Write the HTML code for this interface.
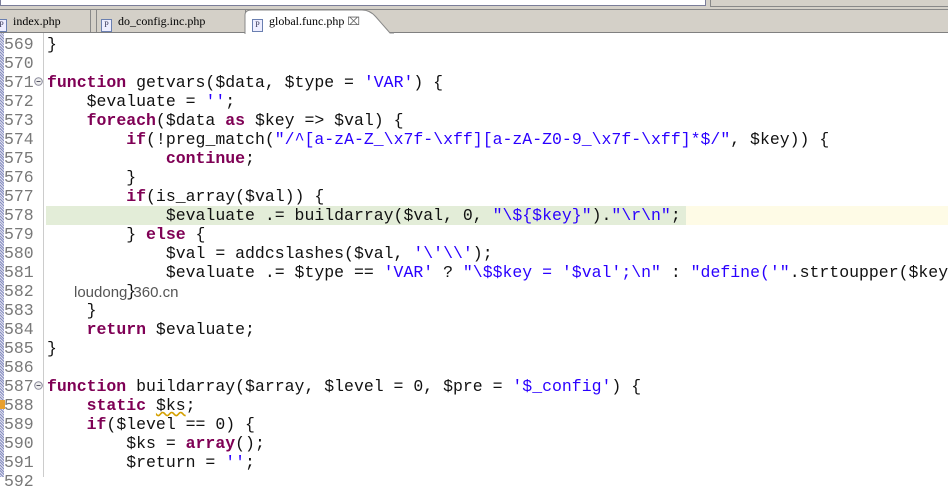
<!DOCTYPE html>
<html><head><meta charset="utf-8"><style>
body{margin:0;width:948px;height:477px;overflow:hidden;background:#fff;position:relative;font-family:"Liberation Mono",monospace;}
.top{position:absolute;left:0;top:0;width:948px;height:33px;background:#d4d0c8;border-bottom:1px solid #808080;box-sizing:border-box}
.strip{position:absolute;left:0;top:0;width:706px;height:6px;background:#fff;border:1px solid #7a7d99;border-top:none;box-sizing:border-box}
.strip2{position:absolute;left:710px;top:0;width:238px;height:6px;border-left:1px solid #888;border-bottom:1px solid #888;}
.hl{position:absolute;left:0;top:9px;width:948px;height:1px;background:#888}
.tab{position:absolute;top:10px;height:22px;font-family:"Liberation Serif",serif;font-size:12px;line-height:22px;color:#000}
.ic{display:inline-block;width:9px;height:11px;border:1px solid #6a7fb0;background:#eef;font-size:8px;line-height:10px;text-align:center;vertical-align:-2px;margin-right:6px;color:#335}
.line{position:absolute;left:0;height:19px;width:948px;font-size:16.5px;line-height:19px;white-space:pre;}
.n{position:absolute;left:4px;width:30px;color:#787878;}
.c{position:absolute;left:47px;color:#111}
.k{color:#7f0055;font-weight:bold}
.s{color:#2a00ff}
.gut{position:absolute;left:0;top:33px;width:4px;height:444px;background:repeating-linear-gradient(45deg,#8890c0 0 1px,#dde 1px 2px)}
.sep{position:absolute;left:43px;top:33px;width:1px;height:444px;background:#ccc}
</style></head><body>
<div class="top"><div class="strip"></div><div class="strip2"></div><div class="hl"></div>
<div class="tab" style="left:-4px;width:94px;border-right:1px solid #888"><span class="ic">P</span>index.php</div>
<div class="tab" style="left:96px;width:148px;border-left:1px solid #888;border-right:1px solid #888"><span class="ic" style="margin-left:4px">P</span>do_config.inc.php</div>
<svg style="position:absolute;left:244px;top:9px" width="150" height="25"><path d="M1 25 L1 6 Q1 1 8 1 L118 1 Q126 1 132 8 L146 24 L948 24" fill="#fff" stroke="#888"/></svg>
<div class="tab" style="left:252px"><span class="ic">P</span>global.func.php <span style="font-family:'DejaVu Sans';font-size:11px;color:#666">&#x2327;</span></div>
</div>
<div style="position:absolute;left:46px;top:206px;width:640px;height:19px;background:#e3edd8"></div>
<div style="position:absolute;left:686px;top:206px;width:262px;height:19px;background:#fefbe6"></div>
<div class="gut"></div><div class="sep"></div>
<div class="line" style="top:35px"><span class="n">569</span><span class="c">}</span></div>
<div class="line" style="top:54px"><span class="n">570</span></div>
<div class="line" style="top:73px"><span class="n">571</span><span class="c"><span class="k">function</span> getvars($data, $type = <span class="s">'VAR'</span>) {</span></div>
<div class="line" style="top:92px"><span class="n">572</span><span class="c">    $evaluate = <span class="s">''</span>;</span></div>
<div class="line" style="top:111px"><span class="n">573</span><span class="c">    <span class="k">foreach</span>($data <span class="k">as</span> $key =&gt; $val) {</span></div>
<div class="line" style="top:130px"><span class="n">574</span><span class="c">        <span class="k">if</span>(!preg_match(<span class="s">"/^[a-zA-Z_\x7f-\xff][a-zA-Z0-9_\x7f-\xff]*$/"</span>, $key)) {</span></div>
<div class="line" style="top:149px"><span class="n">575</span><span class="c">            <span class="k">continue</span>;</span></div>
<div class="line" style="top:168px"><span class="n">576</span><span class="c">        }</span></div>
<div class="line" style="top:187px"><span class="n">577</span><span class="c">        <span class="k">if</span>(is_array($val)) {</span></div>
<div class="line" style="top:206px"><span class="n">578</span><span class="c">            $evaluate .= buildarray($val, 0, <span class="s">"\${$key}"</span>).<span class="s">"\r\n"</span>;</span></div>
<div class="line" style="top:225px"><span class="n">579</span><span class="c">        } <span class="k">else</span> {</span></div>
<div class="line" style="top:244px"><span class="n">580</span><span class="c">            $val = addcslashes($val, <span class="s">'\'\\'</span>);</span></div>
<div class="line" style="top:263px"><span class="n">581</span><span class="c">            $evaluate .= $type == <span class="s">'VAR'</span> ? <span class="s">"\$$key = '$val';\n"</span> : <span class="s">"define('"</span>.strtoupper($key</span></div>
<div class="line" style="top:282px"><span class="n">582</span><span class="c">        }</span></div>
<div style="position:absolute;left:74px;top:284px;font-family:'Liberation Sans',sans-serif;font-size:15px;color:#555;">loudong<span style="display:inline-block;width:6px"></span>360.cn</div>
<div class="line" style="top:301px"><span class="n">583</span><span class="c">    }</span></div>
<div class="line" style="top:320px"><span class="n">584</span><span class="c">    <span class="k">return</span> $evaluate;</span></div>
<div class="line" style="top:339px"><span class="n">585</span><span class="c">}</span></div>
<div class="line" style="top:358px"><span class="n">586</span></div>
<div class="line" style="top:377px"><span class="n">587</span><span class="c"><span class="k">function</span> buildarray($array, $level = 0, $pre = <span class="s">'$_config'</span>) {</span></div>
<div class="line" style="top:396px"><span class="n">588</span><span class="c">    <span class="k">static</span> <span style="text-decoration:underline wavy #d4a000">$ks</span>;</span></div>
<div class="line" style="top:415px"><span class="n">589</span><span class="c">    <span class="k">if</span>($level == 0) {</span></div>
<div class="line" style="top:434px"><span class="n">590</span><span class="c">        $ks = <span class="k">array</span>();</span></div>
<div class="line" style="top:453px"><span class="n">591</span><span class="c">        $return = <span class="s">''</span>;</span></div>
<div class="line" style="top:472px"><span class="n">592</span></div>
<svg style="position:absolute;left:34px;top:77px" width="9" height="9"><circle cx="4.5" cy="4.5" r="3.8" fill="#eee" stroke="#889"/><line x1="2.5" y1="4.5" x2="6.5" y2="4.5" stroke="#556"/></svg>
<svg style="position:absolute;left:34px;top:381px" width="9" height="9"><circle cx="4.5" cy="4.5" r="3.8" fill="#eee" stroke="#889"/><line x1="2.5" y1="4.5" x2="6.5" y2="4.5" stroke="#556"/></svg>
<div style="position:absolute;left:0;top:400px;width:5px;height:9px;background:#e8a030"></div>
</body></html>
